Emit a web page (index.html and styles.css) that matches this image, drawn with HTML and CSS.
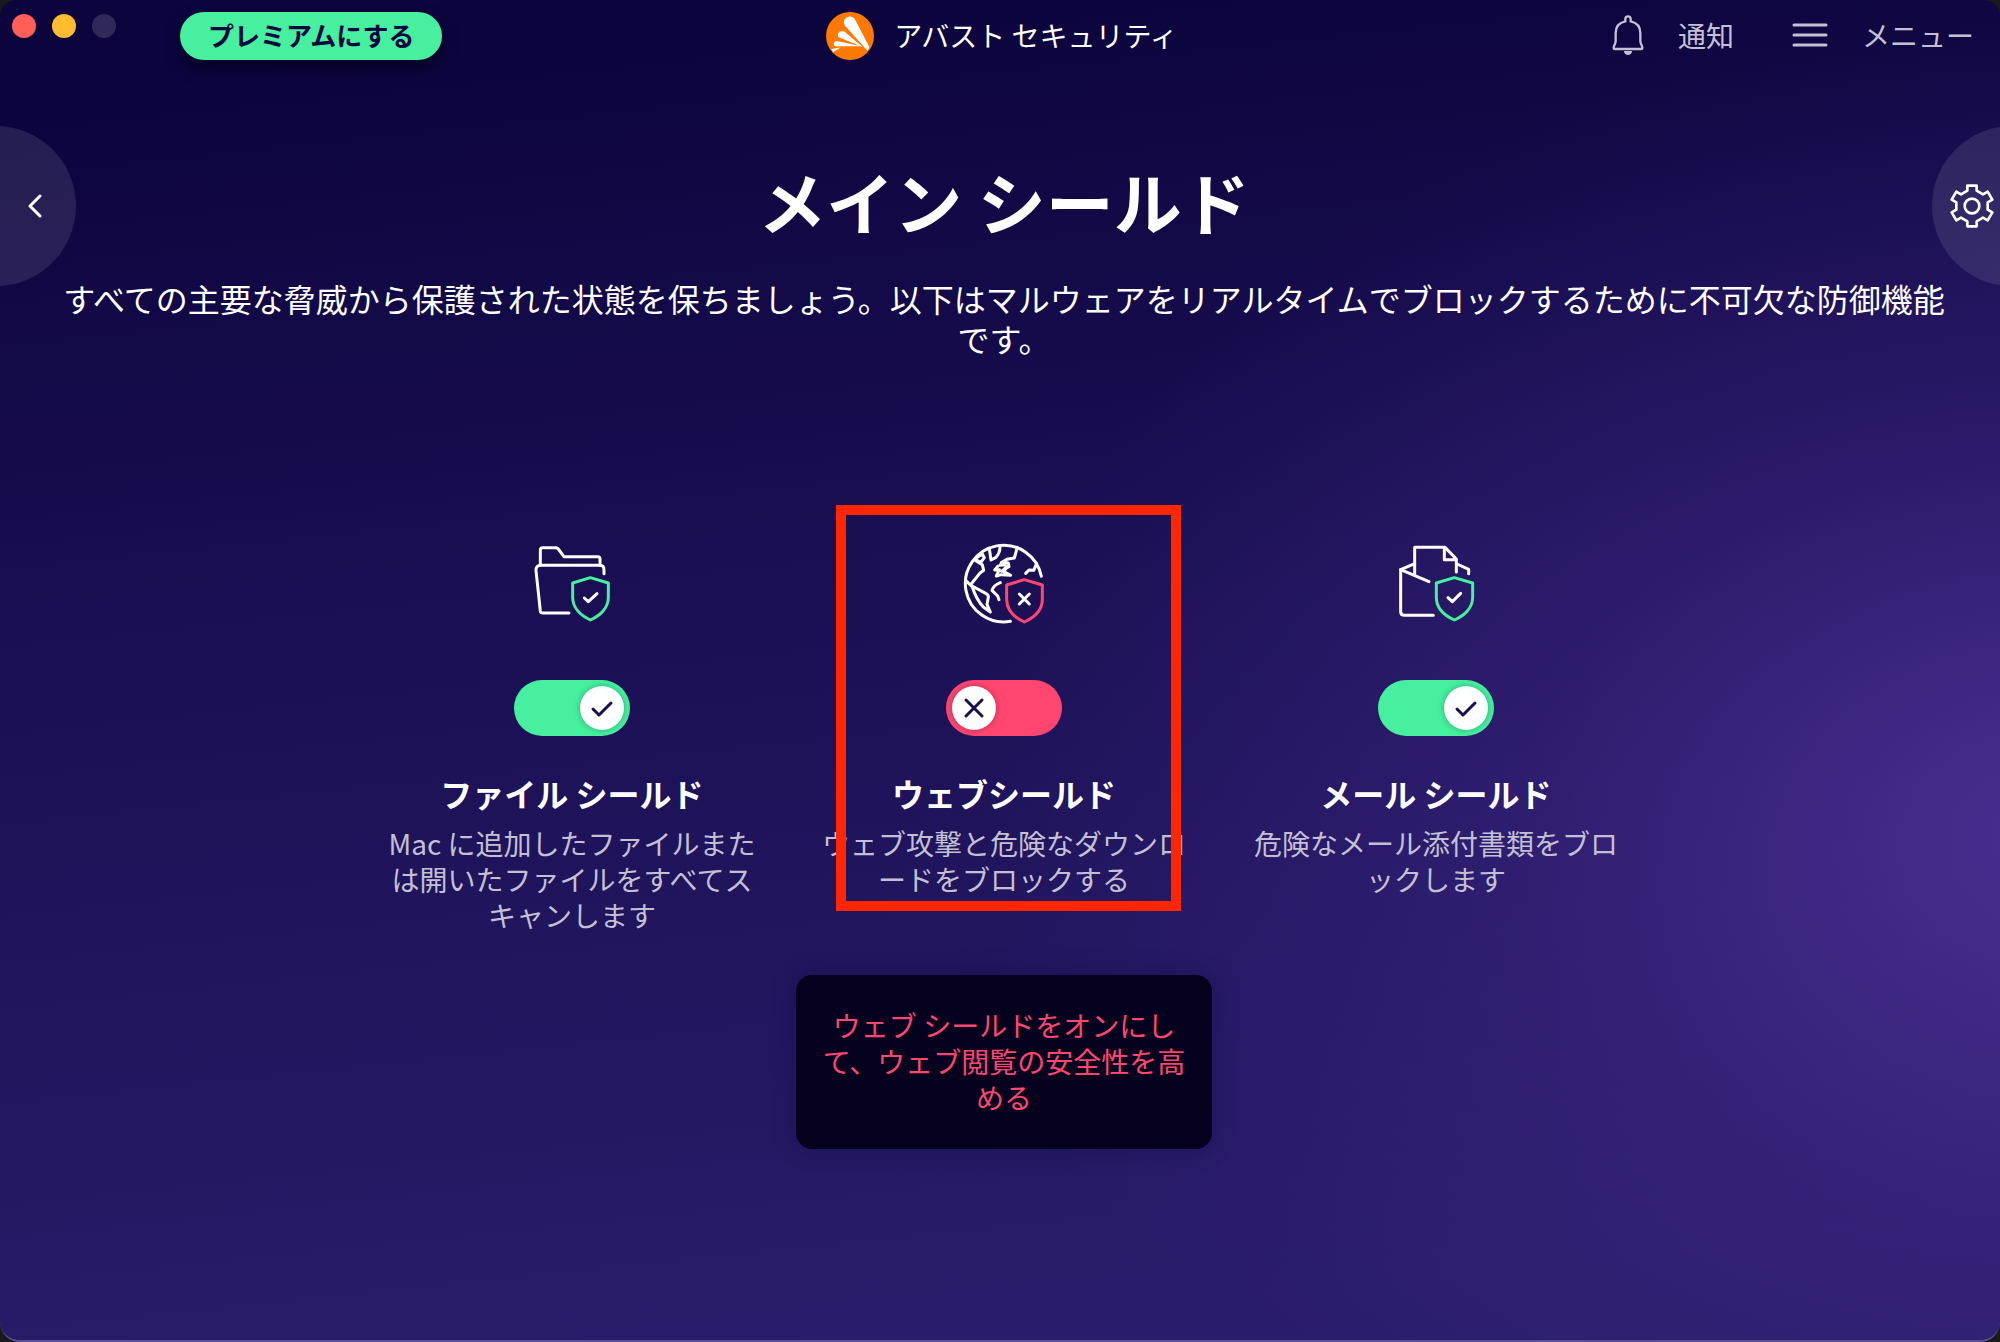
FILE: index.html
```html
<!DOCTYPE html>
<html lang="ja">
  <head>
    <meta charset="UTF-8" />
    <meta name="viewport" content="width=device-width, initial-scale=1.0" />
    <title>アバスト セキュリティ</title>
    <link rel="stylesheet" href="styles.css">
  </head>

  <body>
    <div class="window">
      <header class="titlebar">
        <div class="titlebar-left">
          <div class="window-buttons">
            <button class="dot dot-close" aria-label="閉じる"></button>
            <button class="dot dot-minimize" aria-label="しまう"></button>
            <button class="dot dot-zoom" aria-label="拡大" disabled></button>
          </div>
          <button class="premium-btn">プレミアムにする</button>
        </div>

        <div class="brand">
          <svg class="brand-logo" viewBox="78 36 144 144" aria-hidden="true">
            <circle cx="150" cy="108" r="72" fill="#ff7800" />
            <g fill="#fff">
              <path d="M134 76C126 58 142 46 156 51C162 53 165 58 168 64L208 141L203 153Z" />
              <path d="M116 112C108 99 121 88 134 95L188 141Z" />
              <path d="M107 139C98 137 99 124 110 123L186 139Z" />
              <path d="M94 147L123 142L99 157Z" />
            </g>
          </svg>
          <span>アバスト セキュリティ</span>
        </div>

        <nav class="titlebar-right">
          <button class="nav-btn">
            <svg class="icon-bell" viewBox="93 48 96 120" aria-hidden="true">
              <path d="M141 52C136 52 133 56 133 60V67C114 71 104 83 104 102V126C104 134 98 140 98 146Q98 150 102 150H180Q184 150 184 146C184 140 178 134 178 126V102C178 83 168 71 149 67V60C149 56 146 52 141 52Z" fill="none" stroke="currentColor" stroke-width="7" />
              <path d="M129 156H153C153 164 147 168 141 168C135 168 129 164 129 156Z" fill="currentColor" />
            </svg>
            通知
          </button>
          <button class="nav-btn">
            <svg class="icon-menu" viewBox="0 0 36 24" aria-hidden="true">
              <path d="M2 2H34M2 12H34M2 22H34" fill="none" stroke="currentColor" stroke-width="3" stroke-linecap="round" />
            </svg>
            メニュー
          </button>
        </nav>
      </header>

      <main>
        <div class="hero">
          <button class="side-btn back-btn" aria-label="戻る">
            <svg class="icon-back" viewBox="0 0 14 24" aria-hidden="true">
              <path d="M12 2L2 12L12 22" fill="none" stroke="#fff" stroke-width="3" stroke-linecap="round" stroke-linejoin="round" />
            </svg>
          </button>
          <h1>メイン シールド</h1>
          <button class="side-btn settings-btn" aria-label="設定">
            <svg class="icon-gear" viewBox="-66 -66 132 132" aria-hidden="true">
              <g fill="none" stroke="#fff" stroke-width="8" stroke-linejoin="round">
                <path d="M-14 -46V-61H14V-46L33 -35L47 -43L61 -19L47 -11V11L61 19L47 43L33 35L14 46V61H-14V46L-33 35L-47 43L-61 19L-47 11V-11L-61 -19L-47 -43L-33 -35Z" />
                <circle r="22" />
              </g>
            </svg>
          </button>
        </div>

        <div class="content">
          <p class="lead">すべての主要な脅威から保護された状態を保ちましょう。以下はマルウェアをリアルタイムでブロックするために不可欠な防御機能です。</p>

          <div class="shields">
            <section class="shield">
              <svg class="shield-icon" viewBox="66 36 240 240" aria-hidden="true">
                <g class="line">
                  <path d="M177 249H98Q92 249 91 243L78 122Q77 106 92 106H270Q282 106 282 120V131" />
                  <path d="M91 106V60Q91 53 98 53H137Q142 53 145 57L162 80H264Q270 80 270 87V106" />
                  <path d="M223 204L235 215L261 191" />
                </g>
                <path class="badge-on" d="M241 143L295 159V202C295 232 272 256 241 270C210 256 188 232 188 202V159Z" />
              </svg>
              <div class="toggle">
                <input type="checkbox" id="file-shield" checked>
                <span class="knob">
                  <svg viewBox="0 0 44 44" aria-hidden="true"><path d="M13 23L19 29L31 17" /></svg>
                </span>
              </div>
              <h2><label for="file-shield">ファイル シールド</label></h2>
              <p>Mac に追加したファイルまたは開いたファイルをすべてスキャンします</p>
            </section>

            <section class="shield highlighted">
              <svg class="shield-icon" viewBox="72 36 240 240" aria-hidden="true">
                <g class="line">
                  <path d="M304 139A115 115 0 1 0 211 274" />
                  <path d="M107 92L127 104L131 121L121 128L91 165L137 190Q146 194 145 202L141 223L151 246L130 231Q108 207 97 171L78 152" />
                  <path d="M107 88L122 98L133 83L127 72L110 83" />
                  <path d="M148 56L153 90L168 82Q179 70 180 54" />
                  <path d="M232 52L223 84L201 88L184 98L181 106L193 104L203 111L190 124L212 136L184 134L169 138L178 119L164 120L174 108" />
                  <path d="M190 97L205 99L207 110L195 115L184 124" />
                  <path d="M290 101L281 121L267 120L257 130" />
                  <path d="M181 158Q160 166 156 181L173 198L177 209" />
                  <path d="M238 192L268 222M268 192L238 222" />
                </g>
                <path class="badge-off" d="M253 149L307 165V208C307 238 285 262 253 276C221 262 200 238 200 208V165Z" />
              </svg>
              <div class="toggle">
                <input type="checkbox" id="web-shield">
                <span class="knob">
                  <svg viewBox="0 0 44 44" aria-hidden="true"><path d="M14 14L30 30M30 14L14 30" /></svg>
                </span>
              </div>
              <h2><label for="web-shield">ウェブシールド</label></h2>
              <p>ウェブ攻撃と危険なダウンロードをブロックする</p>
            </section>

            <section class="shield">
              <svg class="shield-icon" viewBox="48 36 240 240" aria-hidden="true">
                <g class="line">
                  <path d="M160 256H74Q62 256 62 245V119L104 101" />
                  <path d="M62 119L147 155" />
                  <path d="M104 135V52H195L229 87V126M193 54V89H229" />
                  <path d="M231 102L266 118V131" />
                  <path d="M204 203L217 215L242 190" />
                </g>
                <path class="badge-on" d="M223 143L278 159V202C278 232 255 256 223 270C191 256 169 232 169 202V159Z" />
              </svg>
              <div class="toggle">
                <input type="checkbox" id="mail-shield" checked>
                <span class="knob">
                  <svg viewBox="0 0 44 44" aria-hidden="true"><path d="M13 23L19 29L31 17" /></svg>
                </span>
              </div>
              <h2><label for="mail-shield">メール シールド</label></h2>
              <p>危険なメール添付書類をブロックします</p>
            </section>
          </div>

          <div class="alert" role="alert">ウェブ シールドをオンにして、ウェブ閲覧の安全性を高める</div>
        </div>
      </main>
    </div>
  </body>
</html>
```

FILE: styles.css
```css
* {
  margin: 0;
  padding: 0;
  box-sizing: border-box;
}

body {
  font-family: "Noto Sans CJK JP", sans-serif;
  background-color: #1a1a1c;
  color: #fff;
}

button {
  font-family: inherit;
  color: inherit;
  background: none;
  border: none;
  cursor: pointer;
}

svg {
  display: block;
  flex-shrink: 0;
}

.window {
  min-height: 100vh;
  overflow: hidden;
  border-radius: 16px 16px 20px 20px;
  border-bottom: 2px solid #5a4f90;
  background:
    radial-gradient(ellipse 54% 60% at 103% 62%, rgba(92, 58, 168, 0.68), rgba(72, 46, 145, 0.35) 50%, rgba(60, 40, 130, 0)),
    linear-gradient(174deg, #0c043d 6%, #1c1156 48%, #291c6a 92%);
}

/* Title bar */
.titlebar {
  display: grid;
  grid-template-columns: 1fr auto 1fr;
  align-items: center;
  padding: 12px 0 0 4px;
}

.titlebar-left {
  display: flex;
  align-items: center;
  padding-left: 8px;
}

.window-buttons {
  display: flex;
  gap: 16px;
  align-self: flex-start;
  padding-top: 2px;
}

.dot {
  width: 24px;
  height: 24px;
  border-radius: 50%;
}

.dot-close {
  background-color: #ff5f57;
}

.dot-minimize {
  background-color: #febc2e;
}

.dot-zoom {
  background-color: #302858;
}

.premium-btn {
  height: 48px;
  margin-left: 64px;
  padding: 0 28px 2px;
  border-radius: 24px;
  background-color: #46f09f;
  color: #0c0440;
  font-size: 26px;
  font-weight: bold;
  line-height: 46px;
  box-shadow: 0 8px 16px rgba(4, 0, 24, 0.6);
}

.brand {
  display: flex;
  align-items: center;
  gap: 20px;
  font-size: 28px;
  line-height: 36px;
}

.brand span,
.nav-btn {
  padding-bottom: 2px;
}

.brand-logo {
  width: 48px;
  height: 48px;
}

.titlebar-right {
  display: flex;
  justify-content: flex-end;
  gap: 58px;
  padding-right: 26px;
}

.nav-btn {
  display: flex;
  align-items: center;
  gap: 34px;
  color: #c4c0d4;
  font-size: 28px;
  line-height: 36px;
}

.icon-bell {
  width: 32px;
  height: 40px;
}

.icon-menu {
  width: 36px;
  height: 24px;
}

/* Heading row with the round side buttons */
.hero {
  display: flex;
  align-items: center;
  justify-content: space-between;
  margin-top: 66px;
}

.hero h1 {
  padding-bottom: 10px;
  font-size: 68px;
  line-height: 80px;
}

.side-btn {
  display: flex;
  align-items: center;
  width: 160px;
  height: 160px;
  border-radius: 50%;
  background-color: rgba(255, 255, 255, 0.1);
}

.back-btn {
  justify-content: flex-end;
  margin-left: -84px;
  padding-right: 34px;
}

.settings-btn {
  margin-right: -92px;
  padding-left: 18px;
}

.icon-back {
  width: 14px;
  height: 24px;
}

.icon-gear {
  width: 44px;
  height: 44px;
}

.content {
  margin-top: -8px;
  padding: 0 44px 60px 52px;
}

.lead {
  font-size: 32px;
  line-height: 40px;
  text-align: center;
}

/* Shields */
.shields {
  display: grid;
  grid-template-columns: repeat(3, 368px);
  justify-content: center;
  gap: 64px;
  margin-top: 184px;
}

.shield {
  display: flex;
  flex-direction: column;
  align-items: center;
  text-align: center;
}

.shield-icon {
  width: 80px;
  height: 80px;
  overflow: visible;
  fill: none;
  stroke-width: 9;
  stroke-linecap: round;
  stroke-linejoin: round;
}

.line {
  stroke: #fff;
}

.badge-on {
  stroke: #46f09f;
}

.badge-off {
  stroke: #ff4671;
}

.shield h2 {
  margin-top: 37px;
  font-size: 32px;
  line-height: 40px;
}

.shield p {
  margin-top: 12px;
  color: #c4c0d4;
  font-size: 28px;
  line-height: 36px;
}

.toggle {
  position: relative;
  width: 116px;
  height: 56px;
  margin-top: 58px;
}

.toggle input {
  display: block;
  appearance: none;
  width: 100%;
  height: 100%;
  border-radius: 28px;
  background-color: #ff4671;
  cursor: pointer;
}

.toggle input:checked {
  background-color: #46f09f;
}

.knob {
  position: absolute;
  top: 6px;
  left: 6px;
  width: 44px;
  height: 44px;
  border-radius: 50%;
  background-color: #fff;
  box-shadow: 0 0 6px rgba(0, 0, 0, 0.3);
  pointer-events: none;
}

.toggle input:checked + .knob {
  left: auto;
  right: 6px;
}

.knob path {
  fill: none;
  stroke: #1a0f53;
  stroke-width: 3;
  stroke-linecap: round;
  stroke-linejoin: round;
}

/* Red frame around the shield that needs attention */
.highlighted {
  position: relative;
}

.highlighted::after {
  content: "";
  position: absolute;
  top: -37px;
  right: 7px;
  bottom: 22px;
  left: 16px;
  border: 10px solid #ff2600;
  pointer-events: none;
}

.alert {
  width: 416px;
  margin: 42px auto 0;
  padding: 32px 24px 34px;
  border-radius: 16px;
  background-color: #04001e;
  color: #ff4671;
  font-size: 28px;
  line-height: 36px;
  text-align: center;
  box-shadow: 0 0 24px rgba(10, 2, 50, 0.3);
}
```
